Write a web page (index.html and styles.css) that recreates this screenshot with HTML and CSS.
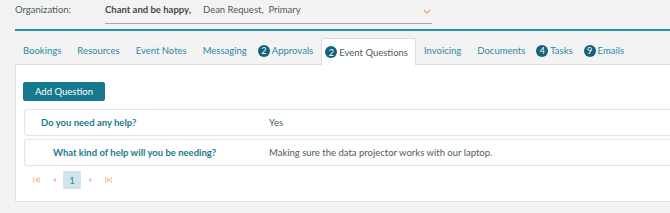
FILE: index.html
```html
<!DOCTYPE html>
<html>
<head>
<meta charset="utf-8">
<link rel="stylesheet" href="styles.css">
</head>
<body>
<div class="page">
  <div class="org-row">
    <span class="org-label">Organization:</span>
    <div class="org-select">
      <span class="org-name">Chant and be happy,</span>
      <span class="org-rest">Dean Request,&nbsp; Primary</span>
      <svg class="chev" width="8" height="5" viewBox="0 0 8 5"><path d="M1 1 L4 4 L7 1" fill="none" stroke="#f0a484" stroke-width="1.4"/></svg>
    </div>
  </div>
  <div class="teal-line"></div>
  <ul class="tabs">
    <li class="tab">Bookings</li>
    <li class="tab">Resources</li>
    <li class="tab">Event Notes</li>
    <li class="tab">Messaging</li>
    <li class="tab with-badge"><span class="badge">2</span>Approvals</li>
    <li class="tab with-badge active"><span class="badge">2</span>Event Questions</li>
    <li class="tab">Invoicing</li>
    <li class="tab">Documents</li>
    <li class="tab with-badge"><span class="badge">4</span>Tasks</li>
    <li class="tab with-badge"><span class="badge">9</span>Emails</li>
  </ul>
  <div class="panel">
    <button class="btn">Add Question</button>
    <div class="qrow">
      <div class="q q1">Do you need any help?</div>
      <div class="a">Yes</div>
    </div>
    <div class="qrow">
      <div class="q q2">What kind of help will you be needing?</div>
      <div class="a">Making sure the data projector works with our laptop.</div>
    </div>
    <div class="pager">
      <span class="pg"><svg width="7" height="6" viewBox="0 0 7 6"><rect x="0" y="0" width="1.2" height="6" fill="#f5c4ae"/><path d="M1.5 3 L5 0.5 V5.5 Z" fill="#f5c4ae"/><rect x="5.5" y="0" width="1.2" height="6" fill="#f5c4ae"/></svg></span>
      <span class="pg"><svg width="5" height="6" viewBox="0 0 5 6"><path d="M0.5 3 L4 0.5 V5.5 Z" fill="#f5c4ae"/></svg></span>
      <span class="pg cur">1</span>
      <span class="pg"><svg width="5" height="6" viewBox="0 0 5 6"><path d="M4.5 3 L1 0.5 V5.5 Z" fill="#f5c4ae"/></svg></span>
      <span class="pg"><svg width="7" height="6" viewBox="0 0 7 6"><rect x="0" y="0" width="1.2" height="6" fill="#f5c4ae"/><path d="M5.5 3 L2 0.5 V5.5 Z" fill="#f5c4ae"/><rect x="5.5" y="0" width="1.2" height="6" fill="#f5c4ae"/></svg></span>
    </div>
  </div>
</div>
</body>
</html>
```
FILE: styles.css
```css
html, body {
  margin: 0;
  padding: 0;
  background: #f3f3f3;
  font-family: Lato, "Open Sans", sans-serif;
  font-size: 9.5px;
  color: #4d5b60;
}
.page {
  padding-left: 15px;
  width: 655px;
  height: 213px;
  overflow: hidden;
}
.org-row {
  display: flex;
  align-items: flex-start;
  height: 24px;
}
.org-label {
  width: 90px;
  line-height: 19px;
  color: #4d5b60;
  white-space: nowrap;
}
.org-select {
  width: 327px;
  height: 23px;
  border-bottom: 1px solid #a8a8a8;
  display: flex;
  align-items: flex-start;
  line-height: 19px;
  white-space: nowrap;
}
.org-name {
  font-weight: bold;
  color: #3f4a4e;
  margin-right: 12px;
}
.org-rest {
  flex: 1;
}
.chev {
  margin-top: 9px;
  margin-right: 1px;
}
.teal-line {
  height: 2px;
  background: #2b93a8;
  margin-top: 5px;
}
.tabs {
  list-style: none;
  margin: 7px 0 0 0;
  padding: 0;
  display: flex;
  height: 26px;
  border-bottom: 1px solid #dcdcdc;
}
.tab {
  flex-shrink: 0;
  white-space: nowrap;
  padding: 0 8px;
  height: 25px;
  color: #2a8aa2;
  display: flex;
  align-items: center;
}
.tab.with-badge {
  padding-left: 3px;
}
.tab.active {
  background: #fff;
  color: #4d5b60;
  border: 1px solid #dcdcdc;
  border-bottom: none;
  border-radius: 2px 2px 0 0;
  height: 26px;
  margin-bottom: -1px;
  padding: 0 7px 0 3px;
}
.badge {
  display: inline-flex;
  align-items: center;
  justify-content: center;
  width: 12px;
  height: 12px;
  border-radius: 50%;
  background: #10647a;
  color: #fff;
  font-size: 9px;
  margin-right: 2px;
}
.panel {
  background: #fff;
  border-left: 1px solid #e2e2e2;
  border-bottom: 1px solid #e2e2e2;
  height: 137px;
  padding: 17px 0 0 7px;
  box-sizing: border-box;
}
.btn {
  display: block;
  background: #167a8f;
  color: #fff;
  border: none;
  border-radius: 2px;
  font-family: Lato, sans-serif;
  font-size: 9.5px;
  width: 82px;
  height: 19px;
  padding: 0;
  margin: 0 0 8px 0;
  text-align: center;
}
.qrow {
  display: flex;
  align-items: center;
  height: 25px;
  border: 1px solid #e4e4e4;
  border-right: none;
  border-radius: 3px 0 0 3px;
  margin-left: 1px;
  margin-bottom: 3px;
  white-space: nowrap;
}
.q {
  font-weight: bold;
  color: #1a7a90;
}
.q1 {
  padding-left: 16px;
  width: 228px;
}
.q2 {
  padding-left: 28px;
  width: 216px;
}
.a {
  color: #4d5b60;
}
.pager {
  display: flex;
  align-items: center;
  margin-top: 5px;
  padding-left: 4px;
}
.pg {
  width: 18px;
  height: 18px;
  display: flex;
  align-items: center;
  justify-content: center;
  color: #2a8aa2;
  font-size: 9.5px;
}
.pg.cur {
  background: #d0e4ea;
}
```
